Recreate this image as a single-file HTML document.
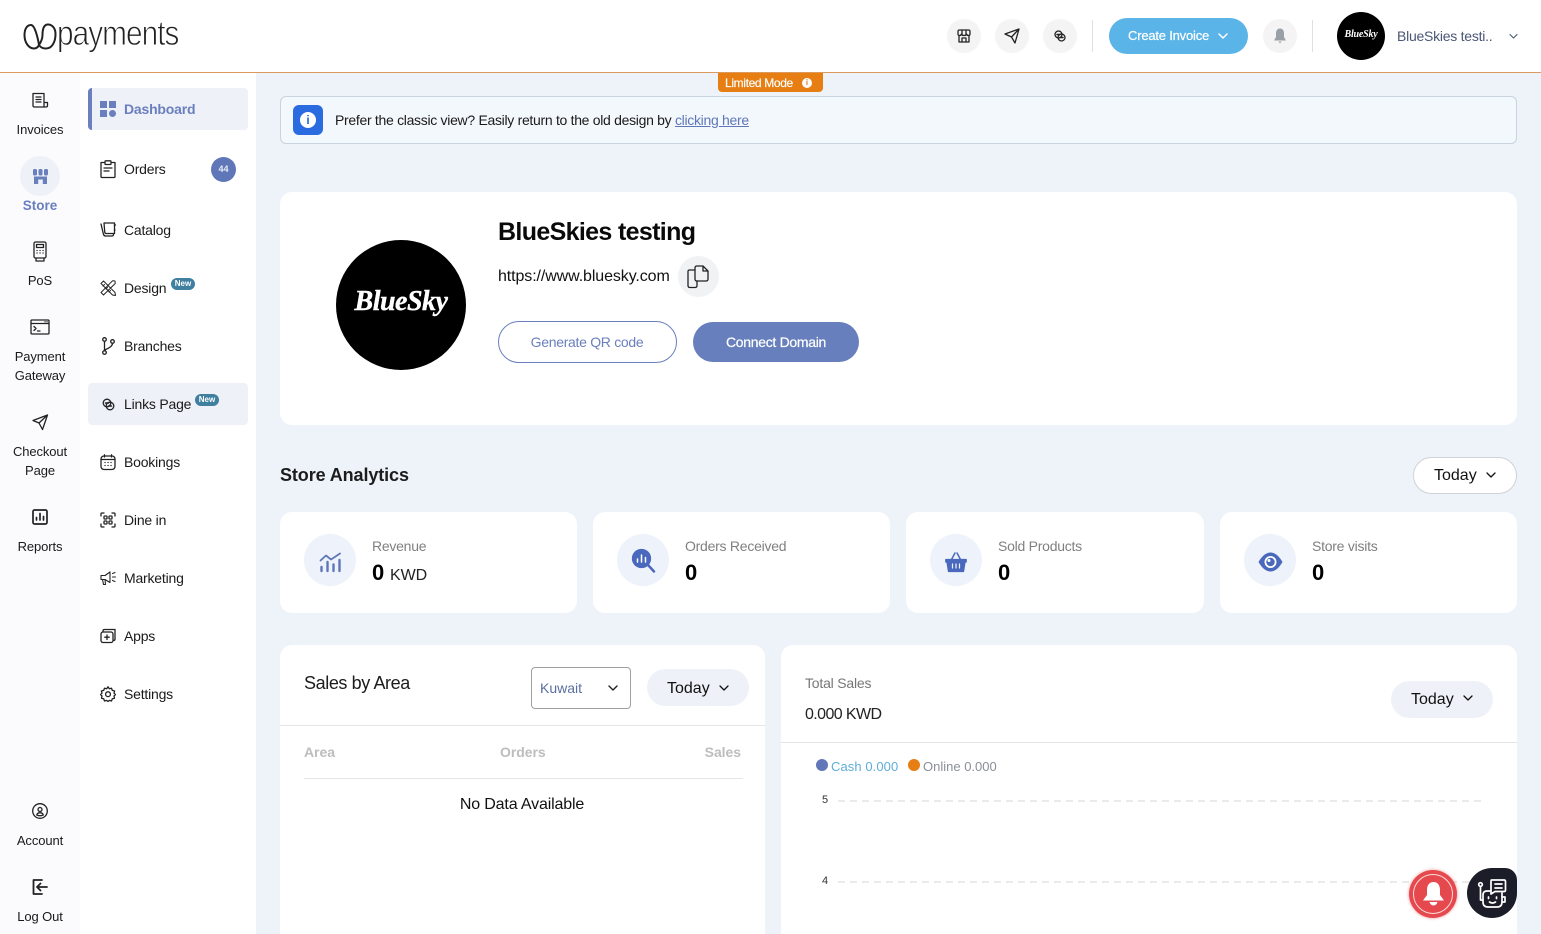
<!DOCTYPE html>
<html lang="en"><head><meta charset="utf-8"><title>Dashboard</title>
<style>
*{box-sizing:border-box}
html,body{margin:0;padding:0;width:1541px;height:934px;overflow:hidden}
body{position:relative;background:#eef2f9;font-family:"Liberation Sans",sans-serif;color:#111}
.a{position:absolute}
.t{position:absolute;white-space:nowrap;line-height:20px;height:20px}
.c{transform:translateX(-50%)}
.r{transform:translateX(-100%)}
.card{position:absolute;background:#fff;border-radius:12px}
.circ{position:absolute;border-radius:50%}
svg{position:absolute;overflow:visible;fill:none;stroke:#222;stroke-width:1.3;stroke-linecap:round;stroke-linejoin:round}
.rl{font-size:13px;letter-spacing:-.1px;color:#1a1a1a}
.nl{font-size:14px;letter-spacing:-.2px;left:124px;color:#1a1a1a}
.new{position:absolute;width:24px;height:12px;border-radius:6px;background:#3f7f9f;color:#fff;font-size:8px;font-weight:bold;text-align:center;line-height:11px}
.lab{font-size:14px;color:#808080;letter-spacing:-.25px}
.val{font-size:22px;font-weight:bold;color:#000}
.pill{position:absolute;border-radius:19px}
</style></head><body>

<!-- sidebars -->
<div class="a" style="left:0;top:72px;width:80px;height:862px;background:#fbfbfd"></div>
<div class="a" style="left:80px;top:72px;width:176px;height:862px;background:#fff"></div>

<!-- header -->
<div class="a" style="left:0;top:0;width:1541px;height:73px;background:#fff;border-bottom:1px solid #dc9a5c"></div>
<svg style="left:23px;top:22px" width="34" height="28" viewBox="0 0 34 28"><path d="M8 3C4 3 1.500 7 1.500 13C1.500 21 6 26.500 11 26.500C13.500 26.500 15 25 16 23C15 17 12 3 8 3ZM16 23C17.500 25.500 20 26.500 23 26.500C29 26.500 32.500 20 32.500 12C32.500 6 29 2.500 25 2.500C21 2.500 19.500 7 19.500 13C19.500 17 18 20 16 23" stroke="#222" stroke-width="2"/></svg>
<div class="t" style="left:57px;top:14px;height:40px;line-height:40px;font-size:35px;letter-spacing:-1.1px;color:#222;-webkit-text-stroke:.9px #fff;transform:scaleX(.85);transform-origin:left center">payments</div>

<div class="circ" style="left:947px;top:19px;width:34px;height:34px;background:#f4f4f5"></div>
<svg style="left:957px;top:29px" width="14" height="14" viewBox="0 0 14 14"><path d="M1 5V2.500Q1 1 2.500 1H11.500Q13 1 13 2.500V5Q13 6.500 11.500 6.500Q10 6.500 9.500 5Q9 6.500 7 6.500Q5 6.500 4.500 5Q4 6.500 2.500 6.500Q1 6.500 1 5ZM2 6.500V13H12V6.500M5 13V9H9V13M5 1V5M9 1V5"/></svg>
<div class="circ" style="left:995px;top:19px;width:34px;height:34px;background:#f4f4f5"></div>
<svg style="left:1004px;top:28px" width="16" height="16" viewBox="0 0 16 16"><path d="M1 6L15 1L11 15L7.500 9ZM7.500 9L15 1"/></svg>
<div class="circ" style="left:1043px;top:19px;width:34px;height:34px;background:#f4f4f5"></div>
<svg style="left:1054px;top:30px" width="12" height="12" viewBox="0 0 12 12"><circle cx="4.500" cy="4.500" r="3.500"/><circle cx="7.500" cy="7.500" r="3.500"/><path d="M3 4.500H6M6 7.500H9" stroke-width="1.600"/></svg>
<div class="a" style="left:1092px;top:20px;width:1px;height:32px;background:#dde0e4"></div>
<div class="pill" style="left:1109px;top:18px;width:139px;height:36px;background:#5ab4e8"></div>
<div class="t" style="left:1128px;top:26px;font-size:13px;letter-spacing:-.2px;color:#fff;-webkit-text-stroke:.2px #fff">Create Invoice</div>
<svg style="left:1218px;top:33px;stroke:#fff;stroke-width:1.500" width="10" height="6" viewBox="0 0 10 6"><path d="M1 1L5 5L9 1"/></svg>
<div class="circ" style="left:1263px;top:19px;width:34px;height:34px;background:#f4f4f5"></div>
<svg style="left:1273px;top:28px;fill:#9aa0a8;stroke:none" width="14" height="16" viewBox="0 0 14 16"><path d="M7 0.500C4.500 0.500 3 2.500 3 5V9L1 12.500H13L11 9V5C11 2.500 9.500 0.500 7 0.500ZM5.500 13.500H8.500L7 15.500Z"/></svg>
<div class="a" style="left:1312px;top:20px;width:1px;height:32px;background:#dde0e4"></div>
<div class="circ" style="left:1337px;top:12px;width:48px;height:48px;background:#000"></div>
<div class="t c" style="left:1361px;top:25px;font:italic bold 10px/20px 'Liberation Serif',serif;color:#fff;letter-spacing:-.2px">BlueSky</div>
<div class="t" style="left:1397px;top:26px;font-size:14px;letter-spacing:-.25px;color:#4b5675">BlueSkies testi..</div>
<svg style="left:1509px;top:34px;stroke:#4b5675;stroke-width:1.100" width="9" height="5" viewBox="0 0 9 5"><path d="M1 .5L4.500 4L8 .5"/></svg>

<!-- rail -->
<svg style="left:32px;top:92px" width="17" height="17" viewBox="0 0 17 17"><path d="M2.500 15H12V1.500H1V13.500Q1 15 2.500 15ZM4 5H9M4 7.500H9M4 10H9M12 10.500H15.500V13.500Q15.500 15 14 15H12"/></svg>
<div class="t c rl" style="left:40px;top:120px">Invoices</div>
<div class="circ" style="left:20px;top:156px;width:40px;height:40px;background:#eef1f8"></div>
<svg style="left:33px;top:169px;stroke:none;fill:#6a7fbd" width="15" height="15" viewBox="0 0 15 15"><rect x="0" y="0" width="4" height="6.500" rx="1.500"/><rect x="5.500" y="0" width="4" height="6.500" rx="1.500"/><rect x="11" y="0" width="4" height="6.500" rx="1.500"/><path d="M1 7.500H14V15H9.800V10.500H5.200V15H1Z"/></svg>
<div class="t c" style="left:40px;top:196px;font-size:13.500px;font-weight:bold;color:#6a7fbd">Store</div>
<svg style="left:33px;top:241px" width="14" height="21" viewBox="0 0 14 21"><rect x="1" y="1" width="12" height="16" rx="1.500"/><rect x="3.500" y="3.500" width="7" height="3"/><path d="M4 9.500H4.100M7 9.500H7.100M10 9.500H10.100M4 12H4.100M7 12H7.100M10 12H10.100M3 17V20H11V17"/></svg>
<div class="t c rl" style="left:40px;top:271px">PoS</div>
<svg style="left:30px;top:319px" width="20" height="16" viewBox="0 0 20 16"><rect x="1" y="1" width="18" height="14" rx="1"/><path d="M1 4.500H19M15 2.800H15.100M17 2.800H17.100M4 7.500L6 9.500L4 11.500M7.500 12H10"/></svg>
<div class="t c rl" style="left:40px;top:347px">Payment</div>
<div class="t c rl" style="left:40px;top:366px">Gateway</div>
<svg style="left:32px;top:414px" width="16" height="16" viewBox="0 0 16 16"><path d="M1 6.500L15.500 1L10.500 15.500L7 9ZM7 9L15.500 1"/></svg>
<div class="t c rl" style="left:40px;top:442px">Checkout</div>
<div class="t c rl" style="left:40px;top:461px">Page</div>
<svg style="left:32px;top:509px;stroke-width:1.700" width="16" height="16" viewBox="0 0 16 16"><rect x="1" y="1" width="14" height="14" rx="1.500"/><path d="M4.500 11V8.500M8 11V4.500M11.500 11V7.500"/></svg>
<div class="t c rl" style="left:40px;top:537px">Reports</div>
<svg style="left:32px;top:803px" width="16" height="16" viewBox="0 0 16 16"><circle cx="8" cy="8" r="7.300"/><circle cx="8" cy="6.500" r="2"/><path d="M4.800 12Q5 9.800 8 9.800Q11 9.800 11.200 12Q8 13.500 4.800 12Z"/></svg>
<div class="t c rl" style="left:40px;top:831px">Account</div>
<svg style="left:32px;top:879px;stroke-width:1.800" width="16" height="16" viewBox="0 0 16 16"><path d="M10 1H1.500V15H10M15 8H5M8.500 4.500L5 8L8.500 11.500"/></svg>
<div class="t c rl" style="left:40px;top:907px">Log Out</div>

<!-- nav -->
<div class="a" style="left:88px;top:88px;width:160px;height:42px;background:#eef1f8;border-radius:4px;border-left:4px solid #6a7fbd"></div>
<svg style="left:100px;top:101px;fill:#6a7fbd;stroke:none" width="16" height="16" viewBox="0 0 16 16"><rect width="7" height="7"/><rect x="9" width="7" height="7"/><rect y="9" width="7" height="7"/><circle cx="12.500" cy="12.500" r="3.500"/></svg>
<div class="t" style="left:124px;top:99px;font-size:14px;font-weight:bold;letter-spacing:-.2px;color:#6a7fbd">Dashboard</div>

<svg style="left:100px;top:160px" width="16" height="18" viewBox="0 0 16 18"><path d="M5 2.500H1V16.500Q1 17.500 2 17.500H14Q15 17.500 15 16.500V2.500H11M5 1.500Q5 .8 6 .8H10Q11 .8 11 1.500V4Q11 4.500 10 4.500H6Q5 4.500 5 4ZM4 8H12M4 11H9"/></svg>
<div class="t nl" style="top:159px">Orders</div>
<div class="circ" style="left:211px;top:157px;width:25px;height:25px;background:#5f77b8;color:#e6ebf7;font-size:9px;font-weight:bold;line-height:25px;text-align:center">44</div>

<svg style="left:100px;top:222px" width="16" height="15" viewBox="0 0 16 15"><path d="M1 2L3.500 12.500Q4 14 6 14H12Q13.500 13.800 13.500 12.500M4 1H14.500V11.500H6Q5 11.500 4.800 10.500Z"/><path d="M14.500 3H15.500M14.500 8H15"/></svg>
<div class="t nl" style="top:220px">Catalog</div>

<svg style="left:100px;top:280px;stroke-width:1" width="16" height="16" viewBox="0 0 16 16"><path d="M1 3.500L3.500 1L15 12.500L15.500 15.500L12.500 15ZM15 1L12.500 .8L1 12.500L3.500 15L15.200 3.500ZM3 6L4.500 4.500M6 9L7.500 7.500M9 12L10.500 10.500"/></svg>
<div class="t nl" style="top:278px">Design</div>
<div class="new" style="left:171px;top:278px">New</div>

<svg style="left:102px;top:337px" width="13" height="18" viewBox="0 0 13 18"><circle cx="2.500" cy="2.500" r="1.800"/><circle cx="2.500" cy="15.500" r="1.800"/><circle cx="10.500" cy="4.500" r="1.800"/><path d="M2.500 4.300V13.700M10.500 6.300Q10.500 10 2.500 13"/></svg>
<div class="t nl" style="top:336px">Branches</div>

<div class="a" style="left:88px;top:383px;width:160px;height:42px;background:#eef2f8;border-radius:4px"></div>
<svg style="left:102px;top:398px" width="13" height="13" viewBox="0 0 13 13"><circle cx="5" cy="5" r="3.800"/><circle cx="8" cy="8" r="3.800"/><path d="M3.500 5H6.500M6.500 8H9.500" stroke-width="1.600"/></svg>
<div class="t nl" style="top:394px">Links Page</div>
<div class="new" style="left:195px;top:394px">New</div>

<svg style="left:100px;top:454px" width="16" height="16" viewBox="0 0 16 16"><rect x="1" y="2" width="14" height="13.500" rx="3"/><path d="M1 5.500H15M4.500 .8V3M11.500 .8V3M5 8.500H5.100M8 8.500H8.100M11 8.500H11.100M5 11.500H5.100M8 11.500H8.100M11 11.500H11.100"/></svg>
<div class="t nl" style="top:452px">Bookings</div>

<svg style="left:100px;top:512px" width="16" height="16" viewBox="0 0 16 16"><path d="M1 4V2Q1 1 2 1H4M12 1H14Q15 1 15 2V4M15 12V14Q15 15 14 15H12M4 15H2Q1 15 1 14V12"/><rect x="4" y="4" width="3" height="3" rx=".7"/><rect x="9" y="4" width="3" height="3" rx=".7"/><rect x="4" y="9" width="3" height="3" rx=".7"/><rect x="9" y="9" width="3" height="3" rx=".7"/></svg>
<div class="t nl" style="top:510px">Dine in</div>

<svg style="left:100px;top:570px;stroke-width:1.100" width="16" height="16" viewBox="0 0 16 16"><path d="M1 5.500H5L10 2V12.500L5 9.500H1ZM2.500 9.500L3.500 14.500H5.500L5 9.500M12.500 3.500L15 2.500M12.500 7H15.500M12.500 10.500L15 11.500"/></svg>
<div class="t nl" style="top:568px">Marketing</div>

<svg style="left:100px;top:628px" width="16" height="15" viewBox="0 0 16 15"><rect x="1" y="4" width="12" height="10.500" rx="2"/><path d="M3 4V3Q3 1.500 4.500 1.500H15V11Q15 12.500 13.500 12.500M7 7V11.500M4.800 9.200H9.200"/></svg>
<div class="t nl" style="top:626px">Apps</div>

<svg style="left:100px;top:686px" width="16" height="16" viewBox="0 0 16 16"><path d="M8 .8L9.300 2.700L11.500 2.200L12.300 4.400L14.600 5L14 7.200L15.400 8.500L14 10L14.500 12.200L12.300 12.800L11.500 15L9.300 14.400L8 15.500L6.500 14.400L4.500 15L3.700 12.800L1.500 12.200L2 10L.6 8.500L2 7.200L1.400 5L3.700 4.400L4.500 2.200L6.700 2.700Z"/><circle cx="8" cy="8.200" r="2.400"/></svg>
<div class="t nl" style="top:684px">Settings</div>

<!-- limited tag -->
<div class="a" style="left:718px;top:73px;width:105px;height:19px;background:#e67e13;border-radius:0 0 4px 4px"></div>
<div class="t" style="left:725px;top:73px;font-size:12px;letter-spacing:-.35px;color:#fff;-webkit-text-stroke:.15px #fff">Limited Mode</div>
<div class="circ" style="left:802px;top:78px;width:10px;height:10px;background:#fff;color:#e67e13;font-size:8px;font-weight:bold;line-height:10px;text-align:center">i</div>

<!-- banner -->
<div class="a" style="left:280px;top:96px;width:1237px;height:48px;background:#f3f8fd;border:1px solid #c9d3de;border-radius:6px"></div>
<div class="a" style="left:293px;top:105px;width:30px;height:30px;background:#2b6be0;border-radius:6px"></div>
<div class="circ" style="left:300px;top:112px;width:16px;height:16px;background:#fff;color:#2b6be0;font-size:12px;font-weight:bold;line-height:16px;text-align:center">i</div>
<div class="t" style="left:335px;top:110px;font-size:14px;letter-spacing:-.3px;color:#1a1a1a">Prefer the classic view? Easily return to the old design by <span style="color:#5f77b8;text-decoration:underline">clicking here</span></div>

<!-- profile -->
<div class="card" style="left:280px;top:192px;width:1237px;height:233px"></div>
<div class="circ" style="left:336px;top:240px;width:130px;height:130px;background:#000"></div>
<div class="t c" style="left:401px;top:289px;height:26px;font:italic bold 28px/26px 'Liberation Serif',serif;letter-spacing:-.5px;color:#fff;-webkit-text-stroke:.4px #fff">BlueSky</div>
<div class="t" style="left:498px;top:217px;height:30px;line-height:30px;font-size:25px;font-weight:bold;letter-spacing:-.65px;color:#0a0a0a">BlueSkies testing</div>
<div class="t" style="left:498px;top:267px;font-size:16px;letter-spacing:-.1px;color:#111">https://www.bluesky.com</div>
<div class="circ" style="left:678px;top:256px;width:41px;height:41px;background:#f1f2f4"></div>
<svg style="left:687px;top:265px;stroke:#222;stroke-width:1.300" width="22" height="24" viewBox="0 0 22 24"><path d="M8 5H2.500Q1 5 1 6.500V20.500Q1 22.500 3 22.500H8Q10 22.500 10 20.500V16"/><path d="M8 3Q8 1 10 1H16L21 6V14Q21 16 19 16H10Q8 16 8 14ZM16 1V6H21"/></svg>
<div class="pill" style="left:498px;top:321px;width:179px;height:42px;border:1px solid #6a7fbd;border-radius:21px;background:#fff"></div>
<div class="t c" style="left:587px;top:332px;font-size:14px;letter-spacing:-.3px;color:#6a7fbd">Generate QR code</div>
<div class="pill" style="left:693px;top:322px;width:166px;height:40px;background:#677fbd;border-radius:20px"></div>
<div class="t c" style="left:776px;top:332px;font-size:14px;letter-spacing:-.3px;color:#fff;-webkit-text-stroke:.2px #fff">Connect Domain</div>

<!-- analytics -->
<div class="t" style="left:280px;top:465px;font-size:18px;font-weight:bold;letter-spacing:-.1px;color:#1c1c1c">Store Analytics</div>
<div class="pill" style="left:1413px;top:457px;width:104px;height:37px;background:#fff;border:1px solid #cfd2d6"></div>
<div class="t" style="left:1434px;top:466px;font-size:16px;color:#111">Today</div>
<svg style="left:1486px;top:472px;stroke:#111;stroke-width:1.300" width="10" height="6" viewBox="0 0 10 6"><path d="M1 1L5 5L9 1"/></svg>

<div class="card" style="left:280px;top:512px;width:297px;height:101px"></div>
<div class="card" style="left:593px;top:512px;width:297px;height:101px"></div>
<div class="card" style="left:906px;top:512px;width:298px;height:101px"></div>
<div class="card" style="left:1220px;top:512px;width:297px;height:101px"></div>
<div class="circ" style="left:304px;top:534px;width:52px;height:52px;background:#eef2fa"></div>
<div class="circ" style="left:617px;top:534px;width:52px;height:52px;background:#eef2fa"></div>
<div class="circ" style="left:930px;top:534px;width:52px;height:52px;background:#eef2fa"></div>
<div class="circ" style="left:1244px;top:534px;width:52px;height:52px;background:#eef2fa"></div>

<svg style="left:319px;top:552px;stroke:#5f77b8;stroke-width:2.400" width="23" height="20" viewBox="0 0 23 20"><path d="M1.500 8.500L7 3.500L12 7.500L21 1.500" stroke-width="1.800"/><path d="M2.500 15V19M8.500 10V19M14.500 12.500V19M20.500 8V19"/></svg>
<svg style="left:632px;top:549px;stroke:#4a69bd" width="23" height="24" viewBox="0 0 23 24"><circle cx="9.500" cy="9.500" r="9" fill="#4a69bd"/><path d="M16 16L22 22.500" stroke-width="2.500"/><path d="M5.500 13V10M9.500 13V6M13.500 13V8.500" stroke="#fff" stroke-width="1.500"/></svg>
<svg style="left:945px;top:552px;stroke:#4a69bd;fill:none" width="22" height="20" viewBox="0 0 22 20"><path d="M6.500 7.500L10 1M15.500 7.500L12 1" stroke-width="1.500"/><path d="M.8 7.500H21.200V10H20L18.500 19.500H3.500L2 10H.8Z" fill="#4a69bd"/><path d="M7.500 12V16M11 12V16M14.500 12V16" stroke="#eef2fa" stroke-width="1.200"/></svg>
<svg style="left:1258px;top:552px;stroke:none" width="25" height="20" viewBox="0 0 25 20"><path d="M.5 10Q6 .5 12.500 .5Q19 .5 24.500 10Q19 19.500 12.500 19.500Q6 19.500 .5 10Z" fill="#4a69bd"/><circle cx="12.500" cy="10" r="6" fill="#fff"/><circle cx="12.500" cy="10" r="4.200" fill="#4a69bd"/><circle cx="11" cy="8.500" r="1.500" fill="#fff"/></svg>

<div class="t lab" style="left:372px;top:536px">Revenue</div>
<div class="t lab" style="left:685px;top:536px">Orders Received</div>
<div class="t lab" style="left:998px;top:536px">Sold Products</div>
<div class="t lab" style="left:1312px;top:536px">Store visits</div>
<div class="t val" style="left:372px;top:563px">0</div>
<div class="t" style="left:390px;top:566px;font-size:16px;letter-spacing:-.1px;color:#222">KWD</div>
<div class="t val" style="left:685px;top:563px">0</div>
<div class="t val" style="left:998px;top:563px">0</div>
<div class="t val" style="left:1312px;top:563px">0</div>

<!-- sales by area -->
<div class="a" style="left:280px;top:645px;width:485px;height:289px;background:#fff;border-radius:12px 12px 0 0"></div>
<div class="t" style="left:304px;top:673px;font-size:18px;letter-spacing:-.4px;color:#1c1c1c">Sales by Area</div>
<div class="a" style="left:531px;top:667px;width:100px;height:42px;border:1px solid #a0a0a0;border-radius:4px"></div>
<div class="t" style="left:540px;top:678px;font-size:14px;color:#5a6f9f">Kuwait</div>
<svg style="left:608px;top:685px;stroke:#222;stroke-width:1.400" width="10" height="6" viewBox="0 0 10 6"><path d="M1 1L5 5L9 1"/></svg>
<div class="pill" style="left:647px;top:669px;width:102px;height:37px;background:#eef1f8"></div>
<div class="t" style="left:667px;top:679px;font-size:16px;color:#111">Today</div>
<svg style="left:719px;top:685px;stroke:#111;stroke-width:1.300" width="10" height="6" viewBox="0 0 10 6"><path d="M1 1L5 5L9 1"/></svg>
<div class="a" style="left:280px;top:725px;width:485px;height:1px;background:#e6e7ea"></div>
<div class="t" style="left:304px;top:742px;font-size:14px;font-weight:bold;letter-spacing:-.05px;color:#bdbdbd">Area</div>
<div class="t" style="left:500px;top:742px;font-size:14px;font-weight:bold;letter-spacing:-.05px;color:#bdbdbd">Orders</div>
<div class="t r" style="left:741px;top:742px;font-size:14px;font-weight:bold;letter-spacing:-.05px;color:#bdbdbd">Sales</div>
<div class="a" style="left:304px;top:778px;width:439px;height:1px;background:#e6e7ea"></div>
<div class="t c" style="left:522px;top:795px;font-size:16px;letter-spacing:-.15px;color:#111">No Data Available</div>

<!-- total sales -->
<div class="a" style="left:781px;top:645px;width:736px;height:289px;background:#fff;border-radius:12px 12px 0 0"></div>
<div class="t" style="left:805px;top:673px;font-size:14px;letter-spacing:-.2px;color:#777">Total Sales</div>
<div class="t" style="left:805px;top:705px;font-size:16px;letter-spacing:-.6px;color:#222">0.000 KWD</div>
<div class="pill" style="left:1391px;top:681px;width:102px;height:37px;background:#eef1f8"></div>
<div class="t" style="left:1411px;top:690px;font-size:16px;color:#111">Today</div>
<svg style="left:1463px;top:695px;stroke:#111;stroke-width:1.300" width="10" height="6" viewBox="0 0 10 6"><path d="M1 1L5 5L9 1"/></svg>
<div class="a" style="left:781px;top:742px;width:736px;height:1px;background:#e3e5e9"></div>
<div class="circ" style="left:816px;top:759px;width:12px;height:12px;background:#6277b8"></div>
<div class="t" style="left:831px;top:757px;font-size:13px;letter-spacing:.08px;color:#5eaed8">Cash 0.000</div>
<div class="circ" style="left:908px;top:759px;width:12px;height:12px;background:#e67e13"></div>
<div class="t" style="left:923px;top:757px;font-size:13px;letter-spacing:0;color:#8a8f98">Online 0.000</div>
<div class="t" style="left:822px;top:790px;font-size:11px;color:#333">5</div>
<div class="t" style="left:822px;top:871px;font-size:11px;color:#333">4</div>
<svg style="left:838px;top:800px;stroke:#d4d4d4;stroke-width:1;stroke-linecap:butt" width="645" height="84" viewBox="0 0 645 84"><path d="M0 1H645M0 82H645" stroke-dasharray="7 5"/></svg>

<!-- floats -->
<div class="circ" style="left:1409px;top:870px;width:48px;height:48px;background:#e5484d;box-shadow:0 0 3px rgba(229,72,77,.6)"></div>
<div class="circ" style="left:1413px;top:874px;width:40px;height:40px;border:1px solid #fbdcdc"></div>
<svg style="left:1422px;top:882px;fill:#fff;stroke:none" width="23" height="24" viewBox="0 0 23 24"><path d="M11.500 0C7.500 0 5 3 5 8V13L1 18.500H22L18 13V8C18 3 15.500 0 11.500 0ZM7.500 20H15.500Q14.500 23.500 11.500 23.500Q8.500 23.500 7.500 20Z"/></svg>
<div class="a" style="left:1467px;top:868px;width:50px;height:50px;background:#1b1e28;border-radius:25px 12px 25px 25px"></div>
<svg style="left:1478px;top:879px;stroke:#fff;stroke-width:1.700" width="28" height="29" viewBox="0 0 28 29"><path d="M13.500 1H26Q27.500 1 27.500 2.500V11Q27.500 12.500 26 12.500H17L13 15V2.500Q13 1 13.500 1ZM17 5H24M17 9H24"/><path d="M12 12H9Q5 12 5 16V23Q5 28 10 28H19Q24 28 24 23V14"/><path d="M2.500 8V21H5M24 18H27V23H24"/><circle cx="2.500" cy="5.500" r="1.800"/><path d="M10.500 18V19.500M18.500 18V19.500M11.500 23Q14.500 25 17.500 23"/></svg>
</body></html>
